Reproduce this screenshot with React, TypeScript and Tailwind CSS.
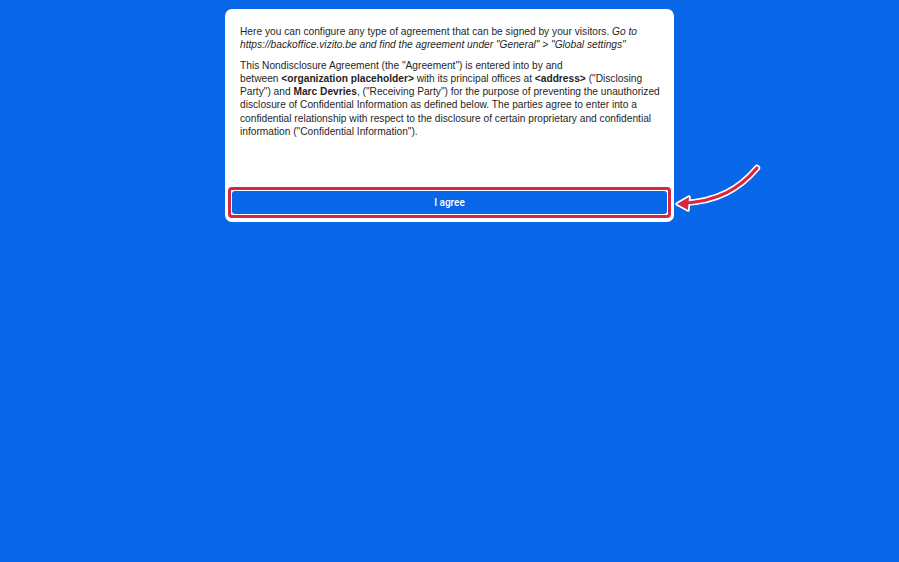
export default function App() {
  return (
    <div className="relative min-h-[562px] w-full bg-[#0866e8] pt-[9px] font-['Liberation_Sans',Arial,sans-serif]">
      <div className="mx-auto flex w-[449px] flex-col rounded-[7px] bg-white">
        <div className="pl-[15px] pr-[9px] pt-[16px] text-[10.2px] leading-[13.3px] text-[#1f1f1f]">
          <p>
            Here you can configure any type of agreement that can be signed by your visitors.{" "}
            <em>
              Go to https://backoffice.vizito.be and find the agreement under "General" &gt; "Global settings"
            </em>
          </p>
          <p className="mt-[7px]">
            This Nondisclosure Agreement (the "Agreement") is entered into by and
            <br />
            between <b>&lt;organization placeholder&gt;</b> with its principal offices at <b>&lt;address&gt;</b>{" "}
            ("Disclosing Party") and <b>Marc Devries</b>, ("Receiving Party") for the purpose of preventing the
            unauthorized disclosure of Confidential Information as defined below. The parties agree to enter
            into a confidential relationship with respect to the disclosure of certain proprietary and
            confidential information ("Confidential Information").
          </p>
        </div>
        <div className="mt-[48px] px-[2px] pb-[3px]">
          <div className="rounded-[5px] border-[1px] border-white">
            <div className="rounded-[4px] border-[3px] border-[#d7263d] p-[1px]">
              <button className="flex h-[23px] w-full items-center justify-center rounded-[3px] bg-[#0866e8] font-['Roboto',sans-serif] text-[10px] font-medium text-white">
                I agree
              </button>
            </div>
          </div>
        </div>
      </div>
      <svg className="absolute left-[668px] top-[160px]" width="100" height="60" viewBox="0 0 100 60" fill="none">
        <path d="M89 8 C 72 28, 50 42, 14 43" stroke="white" strokeWidth="6.5" strokeLinecap="round" />
        <path d="M9 44 L21 37 L20 50 Z" fill="white" stroke="white" strokeWidth="3.5" strokeLinejoin="round" />
        <path d="M89 8 C 72 28, 50 42, 14 43" stroke="#d7263d" strokeWidth="3.2" strokeLinecap="round" />
        <path d="M9 44 L21 37 L20 50 Z" fill="#d7263d" />
      </svg>
    </div>
  );
}
